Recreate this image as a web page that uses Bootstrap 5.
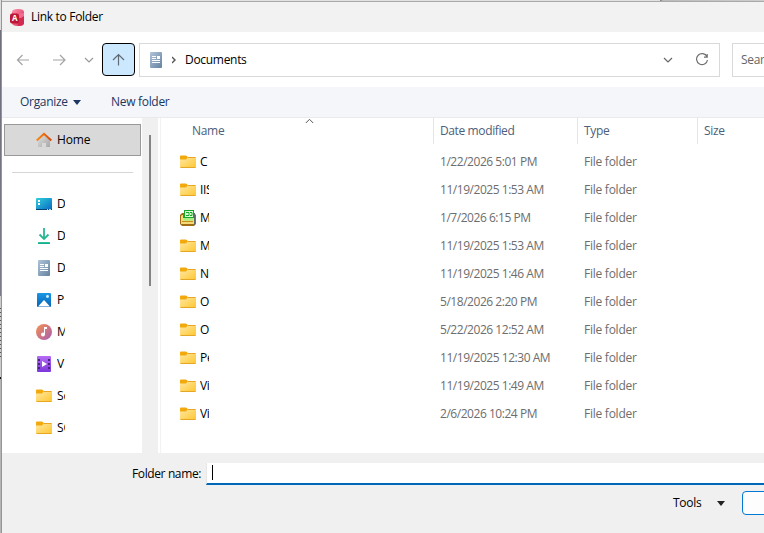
<!DOCTYPE html>
<html lang="en">
<head>
<meta charset="utf-8">
<meta name="viewport" content="width=device-width, initial-scale=1">
<title>Link to Folder</title>
<link href="https://cdn.jsdelivr.net/npm/bootstrap@5.3.0/dist/css/bootstrap.min.css" rel="stylesheet">
<style>
body{width:764px;height:533px;font:12px/16px "Open Sans","Noto Sans",sans-serif;color:#000;background:#fff;letter-spacing:-.3px}
svg{display:block;flex:none}
.edge{width:2px;flex:none;border-right:1px solid #96969a;background:linear-gradient(#ddd 30px,#6e6e7c 30px,#7b7b8c 296px,#ccc 296px,#ccc 305px,transparent 305px,transparent 357px,#ccc 357px,#ccc 377px,#111 377px,#111 379px,#b5b5b5 379px),repeating-linear-gradient(#555 0 1px,#ccc 1px 4px)}
.dialog-win{width:762px;height:533px;background:#f0f0f0}
.topline{height:2px;background:linear-gradient(90deg,#e2e2e2 658px,#777 658px,#bbb 661px,#cecece);border-bottom:1px solid #a9a9a9}
.titlebar{height:30px;background:#f2f2f2;padding-left:7px;gap:6px}
.navrow{height:55px;background:#fff}
.navbtn{width:33px;height:33px;flex:none}
.histbtn{width:26px;flex:none}
.upbtn{background:#cce8ff;border:1px solid #000;border-radius:4px}
.address{width:581px;height:34px;border:1px solid #d9d9d9;margin-left:4px;flex:none}
.reload{margin:0 10px 0 22px}
.search{width:60px;height:34px;border:1px solid #d9d9d9;margin-left:12px;padding-left:8px;color:#666;white-space:nowrap}
.commands{height:31px;background:#f4f6f9;border-bottom:1px solid #e8eaed;color:#1c3662;padding-left:18px}
.tri{width:0;height:0;border:4px solid transparent;border-top:5px solid currentColor;border-bottom:0}
.orgname{width:53px}
.newf{margin-left:30px}
.content{height:335px;background:#fff}
.sidebar{width:140px;padding:6px 1px 0 2px;letter-spacing:-.15px}
.place{height:32px;padding-left:32px;gap:5px}
.home{border:1px solid #999;background:#d9d9d9;padding-left:31px}
.rule{height:1px;background:#d6d6d6;margin:16px 8px 15px 8px}
.clip{width:8px;overflow:hidden;white-space:nowrap}
.track{width:16px;background:#f0f0f0;padding:17px 7px 0}
.thumb{width:2px;height:151px;background:#858585}
.listing{margin-left:2px;border-left:1px solid #f2f2f2;width:602px}
.heads{height:26px;color:#4c607a}
.c1{width:272px;flex:none}.c2{width:144px;flex:none;padding-left:6px}.c3{width:120px;flex:none;padding-left:6px}.c4{width:66px;padding-left:6px}
.heads .c2,.heads .c3,.heads .c4{border-left:1px solid #e5e5e5;height:26px;padding-top:5px}
.heads .c2{letter-spacing:-.38px}
.heads .c1{padding:5px 0 0 31px}
.sortmark{margin:-5px 0 0 81px}
.filerow{height:28px;color:#6d6d6d;white-space:nowrap}
.filerow .c1{padding:0 0 1px 19px;gap:4px;color:#000}
.filerow .c1 span{margin-top:1px}
.filerow .c2,.filerow .c3{padding-left:7px;letter-spacing:-.25px}
.filerow .c2{letter-spacing:-.46px}
.files{padding-top:4px}
.filerow .clip{width:9px}
.folderline{padding:10px 0 0 130px}
.flabel{width:69px;white-space:nowrap;letter-spacing:-.38px}
.entry{height:22px;width:558px;background:#fff;border-bottom:2px solid #0067b8;border-left:1px solid #e7e7e7;padding:2px 0 0 5px;margin-left:5px}
.cursorbar{width:1px;height:15px;background:#000}
.actions{margin:6px 0 0 671px}
.toolname{width:28px}
.toolstri{margin-left:16px;color:#222}
.okbtn{width:40px;height:24px;background:#fdfdfd;border:1px solid #0078d4;border-radius:4px;margin-left:17px}
</style>
<script src="https://cdn.jsdelivr.net/npm/bootstrap@5.3.0/dist/js/bootstrap.bundle.min.js"></script>
</head>
<body class="d-flex overflow-hidden">
<svg width="0" height="0" class="position-absolute">
<defs>
<linearGradient id="gf" x1="0" y1="0" x2="1" y2="1"><stop stop-color="#ffe9a6"/><stop offset="1" stop-color="#ffc62e"/></linearGradient>
<linearGradient id="gd" x1="0" y1="0" x2="1" y2="1"><stop stop-color="#b0c4da"/><stop offset="1" stop-color="#64829f"/></linearGradient>
<linearGradient id="gb" x1="0" y1="0" x2="1" y2="1"><stop stop-color="#2fd0dc"/><stop offset="1" stop-color="#0b68c3"/></linearGradient>
<linearGradient id="gp" x1="0" y1="0" x2="0" y2="1"><stop stop-color="#1b98e5"/><stop offset="1" stop-color="#0562b5"/></linearGradient>
<linearGradient id="gm" x1="0" y1="0" x2="1" y2="1"><stop stop-color="#f6924d"/><stop offset="1" stop-color="#a75cb5"/></linearGradient>
<linearGradient id="gv" x1="0" y1="0" x2="0" y2="1"><stop stop-color="#b46cf5"/><stop offset="1" stop-color="#7c35d9"/></linearGradient>
<linearGradient id="gh" x1="0" y1="0" x2="1" y2="1"><stop stop-color="#e0e0e0"/><stop offset="1" stop-color="#a8a8a8"/></linearGradient>
<linearGradient id="go"><stop stop-color="#f78b13"/><stop offset="1" stop-color="#d9470b"/></linearGradient>
<linearGradient id="ga" x1="0" y1="0" x2="1" y2="1"><stop stop-color="#ff93ab"/><stop offset="1" stop-color="#d42753"/></linearGradient>
<linearGradient id="gg" x1="0" y1="0" x2="0" y2="1"><stop stop-color="#35c98e"/><stop offset="1" stop-color="#0da59b"/></linearGradient>
<symbol id="folder" viewBox="0 0 16 16"><path d="M0 2.500q0-1 1-1h5l2 1.500v3H0z" fill="#f1a90c"/><path d="M0 5.500h6l2-2.500h7q1 0 1 1v9q0 1-1 1H1q-1 0-1-1z" fill="url(#gf)"/><path d="M8 3.500h7.500M.5 13.500h15" stroke="#e7a725"/></symbol>
<symbol id="doc" viewBox="0 0 16 16"><rect x="2" width="12" height="16" rx="1" fill="url(#gd)"/><path d="M4 4.500h4M4 6.500h4M4 8.500h8M4 10.500h8" stroke="#fff"/><path d="M9 4h3v3H9z" fill="#fff"/></symbol>
</defs>
</svg>
<div class="edge"></div>
<main class="dialog-win d-flex flex-column flex-shrink-0">
<div class="topline flex-shrink-0"></div>
<header class="titlebar d-flex align-items-center flex-shrink-0">
<svg width="16" height="17" viewBox="0 0 16 17"><path d="M3 3q0-3 6-3t6 3v11q0 3-6 3t-6-3z" fill="url(#ga)"/><path d="M3 3q3 3 12 1v4q-5 3-12 0z" fill="#f66b90"/><path d="M8 9q4 1 7-2v7q0 3-6 3z" fill="#d12b50"/><rect x="1" y="4.500" width="9" height="10" rx="2" fill="#bd1735"/><text x="5.500" y="12.300" font-size="8" font-weight="700" fill="#fff" text-anchor="middle">A</text></svg>
<span>Link to Folder</span>
</header>
<nav class="navrow d-flex align-items-center flex-shrink-0">
<div class="navbtn d-flex align-items-center justify-content-center ms-1"><svg width="13" height="14" fill="none" stroke="#a3a3a3" stroke-width="1.200"><path d="M13 7H2M6.500 2L1.500 7l5 5"/></svg></div>
<div class="navbtn d-flex align-items-center justify-content-center ms-1"><svg width="14" height="14" fill="none" stroke="#a3a3a3" stroke-width="1.200"><path d="M0 7h11M7 2l5 5-5 5"/></svg></div>
<div class="histbtn d-flex align-items-center justify-content-center"><svg width="10" height="8" fill="none" stroke="#999" stroke-width="1.200"><path d="M1 2l4 4 4-4"/></svg></div>
<div class="navbtn upbtn d-flex align-items-center justify-content-center"><svg width="13" height="13" fill="none" stroke="#606a72" stroke-width="1.200"><path d="M6.500 12.500V1.500M1 7l5.500-5.500L12 7"/></svg></div>
<div class="address d-flex align-items-center">
<svg class="ms-2" width="16" height="16"><use href="#doc"/></svg>
<svg class="ms-2" width="5" height="8" fill="none" stroke="#555" stroke-width="1.400"><path d="M0 1.500L3 4.500l-3 3" transform="translate(0 -.5)"/></svg>
<span class="ms-2">Documents</span>
<svg class="ms-auto" width="10" height="8" fill="none" stroke="#666" stroke-width="1.200"><path d="M1 2l4 4 4-4"/></svg>
<svg class="reload" width="14" height="14" fill="none" stroke="#707070" stroke-width="1.200"><path d="M12 3.700A5.500 5.500 0 1 0 12.500 7M12.200 1v3.200H9"/></svg>
</div>
<div class="search d-flex align-items-center flex-shrink-0">Search</div>
</nav>
<div class="commands d-flex align-items-center flex-shrink-0"><span class="orgname">Organize</span><span class="tri"></span><span class="newf">New folder</span></div>
<section class="content d-flex flex-shrink-0">
<aside class="sidebar flex-shrink-0">
<div class="place home d-flex align-items-center"><svg width="16" height="16"><path d="M2 7l6-5 6 5v8H10v-4H6v4H2z" fill="url(#gh)"/><path d="M.7 8.500L8 1.800l7.300 6.700" fill="none" stroke="url(#go)" stroke-width="2"/></svg><span>Home</span></div>
<div class="rule"></div>
<div class="place d-flex align-items-center"><svg width="16" height="16"><rect y="2" width="16" height="12" rx="1" fill="url(#gb)"/><path d="M2 4h2v2H2zM2 7h2v2H2z" fill="#fff"/><path d="M0 13h16v1H0z" fill="#054276"/><path d="M11 13.500h1m1 0h2" stroke="#9de"/></svg><span class="clip">D</span></div>
<div class="place d-flex align-items-center"><svg width="16" height="16"><path d="M8 0v11M3.500 6.500L8 11l4.500-4.500" fill="none" stroke="#27b893" stroke-width="1.800"/><rect x="2" y="14" width="12" height="2" rx=".5" fill="url(#gg)"/></svg><span class="clip">D</span></div>
<div class="place d-flex align-items-center"><svg width="16" height="16"><use href="#doc"/></svg><span class="clip">D</span></div>
<div class="place d-flex align-items-center"><svg width="16" height="16"><rect x="1" y="1" width="14" height="14" rx="1" fill="url(#gp)"/><path d="M2 14.500L8 8l6 6.500z" fill="#fff"/><circle cx="11.500" cy="4.500" r="1.400" fill="#d8f3ff"/></svg><span class="clip">P</span></div>
<div class="place d-flex align-items-center"><svg width="16" height="16"><circle cx="8" cy="8" r="8" fill="url(#gm)"/><path d="M8 3h3v2H9v5.500H8z" fill="#fff"/><circle cx="7" cy="10.500" r="2" fill="#fff"/></svg><span class="clip">M</span></div>
<div class="place d-flex align-items-center"><svg width="16" height="16"><rect x="1" width="14" height="16" rx="1" fill="url(#gv)"/><path d="M2 3h2v2H2zm0 4h2v2H2zm0 4h2v2H2zm10-8h2v2h-2zm0 4h2v2h-2zm0 4h2v2h-2z" fill="#46237f"/><path d="M6 5l5 3-5 3z" fill="#fff"/></svg><span class="clip">V</span></div>
<div class="place d-flex align-items-center"><svg width="16" height="16"><use href="#folder"/></svg><span class="clip">Sc</span></div>
<div class="place d-flex align-items-center"><svg width="16" height="16"><use href="#folder"/></svg><span class="clip">SQ</span></div>
</aside>
<div class="track flex-shrink-0"><div class="thumb"></div></div>
<div class="listing flex-shrink-0">
<div class="heads d-flex"><div class="c1 d-flex"><span>Name</span><svg class="sortmark" width="9" height="6" fill="none" stroke="#555"><path d="M.8 5L4.500 1.300 8.200 5"/></svg></div><div class="c2">Date modified</div><div class="c3">Type</div><div class="c4">Size</div></div>
<div class="files" id="files"></div>
</div>
</section>
<footer>
<div class="d-flex align-items-center folderline"><label class="flabel">Folder name:</label><div class="entry flex-shrink-0"><div class="cursorbar"></div></div></div>
<div class="d-flex align-items-center actions"><span class="toolname">Tools</span><span class="tri toolstri"></span><div class="okbtn flex-shrink-0"></div></div>
</footer>
</main>
<script>
const stack='<svg width="16" height="16"><path d="M4 0h10v8H4z" fill="#17a62a"/><path d="M5 1h8v6H5z" fill="#d8ffd1"/><path d="M6 2.500h3v3H6M10 2.500h2v3h-2" fill="none" stroke="#17a62a"/><path d="M0 5l2-2h2v5h10V3l2 2v9l-2 2H2l-2-2z" fill="#a06d14"/><path d="M1 6l1-1h1v3h11v6H1z" fill="#f5d979"/><path d="M4 8h9v2.500H4z" fill="#a5ee80"/><path d="M2 11.500h11" stroke="#c78c19"/><path d="M14.500 3v12" stroke="#62686b"/></svg>';
const folder='<svg width="16" height="16"><use href="#folder"/></svg>';
const rows=[['C','1/22/2026 5:01 PM'],['IIS','11/19/2025 1:53 AM'],['M','1/7/2026 6:15 PM'],['M','11/19/2025 1:53 AM'],['N','11/19/2025 1:46 AM'],['O','5/18/2026 2:20 PM'],['O','5/22/2026 12:52 AM'],['Pe','11/19/2025 12:30 AM'],['Vi','11/19/2025 1:49 AM'],['Vi','2/6/2026 10:24 PM']];
document.getElementById('files').innerHTML=rows.map((r,i)=>`<div class="filerow d-flex align-items-center"><div class="c1 d-flex align-items-center">${i===2?stack:folder}<span class="clip">${r[0]}</span></div><div class="c2">${r[1]}</div><div class="c3">File folder</div></div>`).join('');
</script>
</body>
</html>
